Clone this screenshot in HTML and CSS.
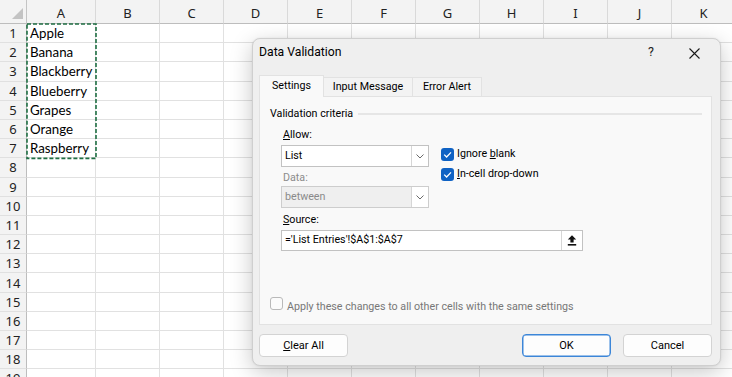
FILE: index.html
```html
<!DOCTYPE html>
<html>
<head>
<meta charset="utf-8">
<title>Data Validation</title>
<link rel="stylesheet" href="styles.css">
</head>
<body>
<div class="sheet">
  <div class="corner"></div><div class="ch">A</div><div class="ch">B</div><div class="ch">C</div><div class="ch">D</div><div class="ch">E</div><div class="ch">F</div><div class="ch">G</div><div class="ch">H</div><div class="ch">I</div><div class="ch">J</div><div class="ch">K</div>
  <div class="rh">1</div><div class="c">Apple</div><div class="c"></div><div class="c"></div><div class="c"></div><div class="c"></div><div class="c"></div><div class="c"></div><div class="c"></div><div class="c"></div><div class="c"></div><div class="c"></div>
  <div class="rh">2</div><div class="c">Banana</div><div class="c"></div><div class="c"></div><div class="c"></div><div class="c"></div><div class="c"></div><div class="c"></div><div class="c"></div><div class="c"></div><div class="c"></div><div class="c"></div>
  <div class="rh">3</div><div class="c">Blackberry</div><div class="c"></div><div class="c"></div><div class="c"></div><div class="c"></div><div class="c"></div><div class="c"></div><div class="c"></div><div class="c"></div><div class="c"></div><div class="c"></div>
  <div class="rh">4</div><div class="c">Blueberry</div><div class="c"></div><div class="c"></div><div class="c"></div><div class="c"></div><div class="c"></div><div class="c"></div><div class="c"></div><div class="c"></div><div class="c"></div><div class="c"></div>
  <div class="rh">5</div><div class="c">Grapes</div><div class="c"></div><div class="c"></div><div class="c"></div><div class="c"></div><div class="c"></div><div class="c"></div><div class="c"></div><div class="c"></div><div class="c"></div><div class="c"></div>
  <div class="rh">6</div><div class="c">Orange</div><div class="c"></div><div class="c"></div><div class="c"></div><div class="c"></div><div class="c"></div><div class="c"></div><div class="c"></div><div class="c"></div><div class="c"></div><div class="c"></div>
  <div class="rh">7</div><div class="c">Raspberry</div><div class="c"></div><div class="c"></div><div class="c"></div><div class="c"></div><div class="c"></div><div class="c"></div><div class="c"></div><div class="c"></div><div class="c"></div><div class="c"></div>
  <div class="rh">8</div><div class="c"></div><div class="c"></div><div class="c"></div><div class="c"></div><div class="c"></div><div class="c"></div><div class="c"></div><div class="c"></div><div class="c"></div><div class="c"></div><div class="c"></div>
  <div class="rh">9</div><div class="c"></div><div class="c"></div><div class="c"></div><div class="c"></div><div class="c"></div><div class="c"></div><div class="c"></div><div class="c"></div><div class="c"></div><div class="c"></div><div class="c"></div>
  <div class="rh">10</div><div class="c"></div><div class="c"></div><div class="c"></div><div class="c"></div><div class="c"></div><div class="c"></div><div class="c"></div><div class="c"></div><div class="c"></div><div class="c"></div><div class="c"></div>
  <div class="rh">11</div><div class="c"></div><div class="c"></div><div class="c"></div><div class="c"></div><div class="c"></div><div class="c"></div><div class="c"></div><div class="c"></div><div class="c"></div><div class="c"></div><div class="c"></div>
  <div class="rh">12</div><div class="c"></div><div class="c"></div><div class="c"></div><div class="c"></div><div class="c"></div><div class="c"></div><div class="c"></div><div class="c"></div><div class="c"></div><div class="c"></div><div class="c"></div>
  <div class="rh">13</div><div class="c"></div><div class="c"></div><div class="c"></div><div class="c"></div><div class="c"></div><div class="c"></div><div class="c"></div><div class="c"></div><div class="c"></div><div class="c"></div><div class="c"></div>
  <div class="rh">14</div><div class="c"></div><div class="c"></div><div class="c"></div><div class="c"></div><div class="c"></div><div class="c"></div><div class="c"></div><div class="c"></div><div class="c"></div><div class="c"></div><div class="c"></div>
  <div class="rh">15</div><div class="c"></div><div class="c"></div><div class="c"></div><div class="c"></div><div class="c"></div><div class="c"></div><div class="c"></div><div class="c"></div><div class="c"></div><div class="c"></div><div class="c"></div>
  <div class="rh">16</div><div class="c"></div><div class="c"></div><div class="c"></div><div class="c"></div><div class="c"></div><div class="c"></div><div class="c"></div><div class="c"></div><div class="c"></div><div class="c"></div><div class="c"></div>
  <div class="rh">17</div><div class="c"></div><div class="c"></div><div class="c"></div><div class="c"></div><div class="c"></div><div class="c"></div><div class="c"></div><div class="c"></div><div class="c"></div><div class="c"></div><div class="c"></div>
  <div class="rh">18</div><div class="c"></div><div class="c"></div><div class="c"></div><div class="c"></div><div class="c"></div><div class="c"></div><div class="c"></div><div class="c"></div><div class="c"></div><div class="c"></div><div class="c"></div>
  <div class="rh">19</div><div class="c"></div><div class="c"></div><div class="c"></div><div class="c"></div><div class="c"></div><div class="c"></div><div class="c"></div><div class="c"></div><div class="c"></div><div class="c"></div><div class="c"></div>
</div>

<svg class="marquee" width="71" height="137" viewBox="0 0 71 137"><rect x="1" y="1" width="69" height="134.4" fill="none" stroke="#1f6e43" stroke-width="1.6" stroke-dasharray="4 2"/></svg>

<div class="dialog">
  <div class="titlebar">
    <span class="title">Data Validation</span>
    <span class="help">?</span>
    <svg class="close" width="11" height="11" viewBox="0 0 11 11"><path d="M0.5 0.5 L10.5 10.5 M10.5 0.5 L0.5 10.5" stroke="#1a1a1a" stroke-width="1.1" fill="none"/></svg>
  </div>
  <div class="tabs">
    <div class="tab active t1">Settings</div>
    <div class="tab t2">Input Message</div>
    <div class="tab t3">Error Alert</div>
  </div>
  <div class="panel">
    <div class="group"><span>Validation criteria</span><span class="rule"></span></div>
    <div class="criteria">
      <div class="fields">
        <div class="label first"><u>A</u>llow:</div>
        <div class="select">
          <span class="val">List</span>
          <span class="drop"><svg width="8" height="5" viewBox="0 0 8 5"><path d="M0.5 0.5 L4 4 L7.5 0.5" stroke="#6a6a6a" stroke-width="1" fill="none"/></svg></span>
        </div>
        <div class="label dim">Data:</div>
        <div class="select disabled">
          <span class="val">between</span>
          <span class="drop"><svg width="8" height="5" viewBox="0 0 8 5"><path d="M0.5 0.5 L4 4 L7.5 0.5" stroke="#6a6a6a" stroke-width="1" fill="none"/></svg></span>
        </div>
      </div>
      <div class="checks">
        <div class="check">
          <span class="box on"><svg width="13" height="13" viewBox="0 0 13 13"><path d="M3.2 6.6 L5.6 9 L10 4.4" stroke="#fff" stroke-width="1.3" fill="none"/></svg></span>
          <span>Ignore <u>b</u>lank</span>
        </div>
        <div class="check">
          <span class="box on"><svg width="13" height="13" viewBox="0 0 13 13"><path d="M3.2 6.6 L5.6 9 L10 4.4" stroke="#fff" stroke-width="1.3" fill="none"/></svg></span>
          <span><u>I</u>n-cell drop-down</span>
        </div>
      </div>
    </div>
    <div class="label src"><u>S</u>ource:</div>
    <div class="source">
      <span class="val">='List Entries'!$A$1:$A$7</span>
      <span class="collapse"><svg width="10" height="11" viewBox="0 0 10 11"><path d="M5 0.3 L9.2 4.6 H6.6 V7.6 H3.4 V4.6 H0.8 Z" fill="#111"/><rect x="0.8" y="9" width="8.4" height="1.6" fill="#111"/></svg></span>
    </div>
    <div class="apply">
      <span class="box off"></span>
      <span>Apply these changes to all other cells with the same settings</span>
    </div>
  </div>
  <div class="buttons">
    <button class="btn"><u>C</u>lear All</button>
    <span class="spacer"></span>
    <button class="btn default">OK</button>
    <button class="btn">Cancel</button>
  </div>
</div>
</body>
</html>
```

FILE: styles.css
```css
* { box-sizing: border-box; margin: 0; padding: 0; }
html, body { width: 732px; height: 377px; overflow: hidden; background: #fff; }
body { position: relative; font-family: "Noto Sans", "Open Sans", sans-serif; color: #000; }

/* ---------- spreadsheet ---------- */
.sheet {
  display: grid;
  grid-template-columns: 27px 69px repeat(10, 64px);
  grid-template-rows: 24px repeat(19, 19.2px);
  width: 763px;
}
.corner {
  position: relative;
  background: #f3f3f3;
  border-right: 1px solid #c4c4c4;
  border-bottom: 1px solid #bdbdbd;
}
.corner::after {
  content: "";
  position: absolute;
  right: 3px;
  bottom: 4px;
  border-style: solid;
  border-width: 0 0 11px 11px;
  border-color: transparent transparent #c3c3c3 transparent;
}
.ch {
  display: flex; align-items: center; justify-content: center;
  padding-top: 3px;
  background: #f3f3f3;
  border-right: 1px solid #d9d9d9;
  border-bottom: 1px solid #bdbdbd;
  font-size: 13px; color: #222;
}
.rh {
  display: flex; align-items: center; justify-content: center;
  background: #f3f3f3;
  border-right: 1px solid #bdbdbd;
  border-bottom: 1px solid #e0e0e0;
  font-size: 13px; color: #222;
}
.c {
  display: flex; align-items: center;
  padding-left: 3px;
  border-right: 1px solid #e1e1e1;
  border-bottom: 1px solid #e1e1e1;
  font-family: Lato, "Liberation Sans", sans-serif;
  font-size: 13.3px; white-space: nowrap; color: #000;
}
.marquee { position: absolute; left: 26px; top: 23px; }

/* ---------- dialog ---------- */
.dialog {
  position: absolute; left: 252px; top: 38px;
  width: 469px; height: 328px;
  display: flex; flex-direction: column;
  background: #efefef;
  border: 1px solid #cfcfcf;
  border-radius: 8px;
  box-shadow: 0 6px 22px rgba(0,0,0,0.22), 0 0 2px rgba(0,0,0,0.08);
  font-family: Roboto, "Noto Sans", sans-serif;
  font-size: 10.7px; line-height: 16px; color: #000;
}
.titlebar {
  height: 36px; flex: none;
  display: flex; align-items: flex-start;
  padding: 5px 0 0 6px;
}
.title { font-size: 12.2px; flex: 1; color: #000; }
.help { font-size: 12.5px; width: 12px; margin-right: 32px; text-align: center; color: #222; }
.close { margin: 4px 20px 0 0; }

.tabs { display: flex; align-items: flex-end; height: 21px; padding-left: 6px; flex: none; position: relative; z-index: 1; }
.tab {
  height: 19px;
  display: flex; align-items: center; justify-content: center;
  background: #f3f3f3;
  border: 1px solid #e2e2e2; border-bottom: none;
  color: #000;
}
.tab.active { height: 22px; margin-bottom: -1px; background: #f9f9f9; padding-bottom: 1px; }
.t1 { width: 65px; }
.t2 { width: 89px; border-left: none; }
.t3 { width: 69px; border-left: none; }

.panel {
  margin-left: 6px; width: 453px; height: 229px; flex: none;
  background: #f9f9f9;
  border: 1px solid #e2e2e2;
  display: flex; flex-direction: column;
  padding: 9px 9px 9px 10px;
}
.group { display: flex; align-items: center; }
.rule { flex: 1; height: 2px; background: #e6e6e6; margin-left: 5px; margin-top: -1px; }

.criteria { display: flex; margin-left: 11px; margin-top: 5px; }
.fields { width: 148px; }
.label { padding-left: 2px; height: 16px; margin-top: 3px; }
.label.first { margin-top: 0; }
.label.dim { color: #8c8c8c; }
.select {
  margin-top: 2px;
  height: 22px;
  display: flex;
  background: #fff;
  border: 1px solid #c2c2c2;
}
.select .val { flex: 1; padding: 2px 0 0 3px; }
.select .drop {
  width: 17px; display: flex; align-items: center; justify-content: center;
  border-left: 1px solid #d6d6d6;
}
.select.disabled { margin-top: 0; background: #efefef; border-color: #cdcdcd; }
.select.disabled .val { color: #8a8a8a; }
.select.disabled .drop { background: #fff; }

.checks { margin-left: 12px; padding-top: 17px; }
.check { display: flex; align-items: center; height: 20px; }
.check > span:last-child { margin-left: 3px; }
.box { width: 13px; height: 13px; border-radius: 3px; flex: none; display: block; }
.box.on { background: #0f62c4; }
.box svg { display: block; }
.box.off { border: 1px solid #b9b9b9; background: #fbfbfb; }

.label.src { margin-left: 11px; margin-top: 4px; }
.source {
  margin: 2px 0 0 11px; width: 302px; height: 21px;
  display: flex; background: #fff; border: 1px solid #c2c2c2;
}
.source .val { flex: 1; padding: 1px 0 0 3px; }
.collapse {
  width: 21px; border-left: 1px solid #d6d6d6;
  display: flex; align-items: center; justify-content: center;
}
.collapse svg { display: block; }

.apply { margin-top: auto; display: flex; align-items: flex-start; color: #777; }
.apply .box { margin-top: 2px; }
.apply > span:last-child { margin-left: 4px; margin-top: 4px; }

.buttons { display: flex; padding: 9px 8px 0 6px; gap: 12px; }
.spacer { flex: 1; }
.btn {
  width: 89px; height: 23px;
  font: inherit; font-size: 11px; color: #000;
  background: #fdfdfd;
  border: 1px solid #d3d3d3;
  border-radius: 4px;
}
.btn.default { border-color: #3c86d8; box-shadow: inset 0 0 0 0.5px #3c86d8; }
```
